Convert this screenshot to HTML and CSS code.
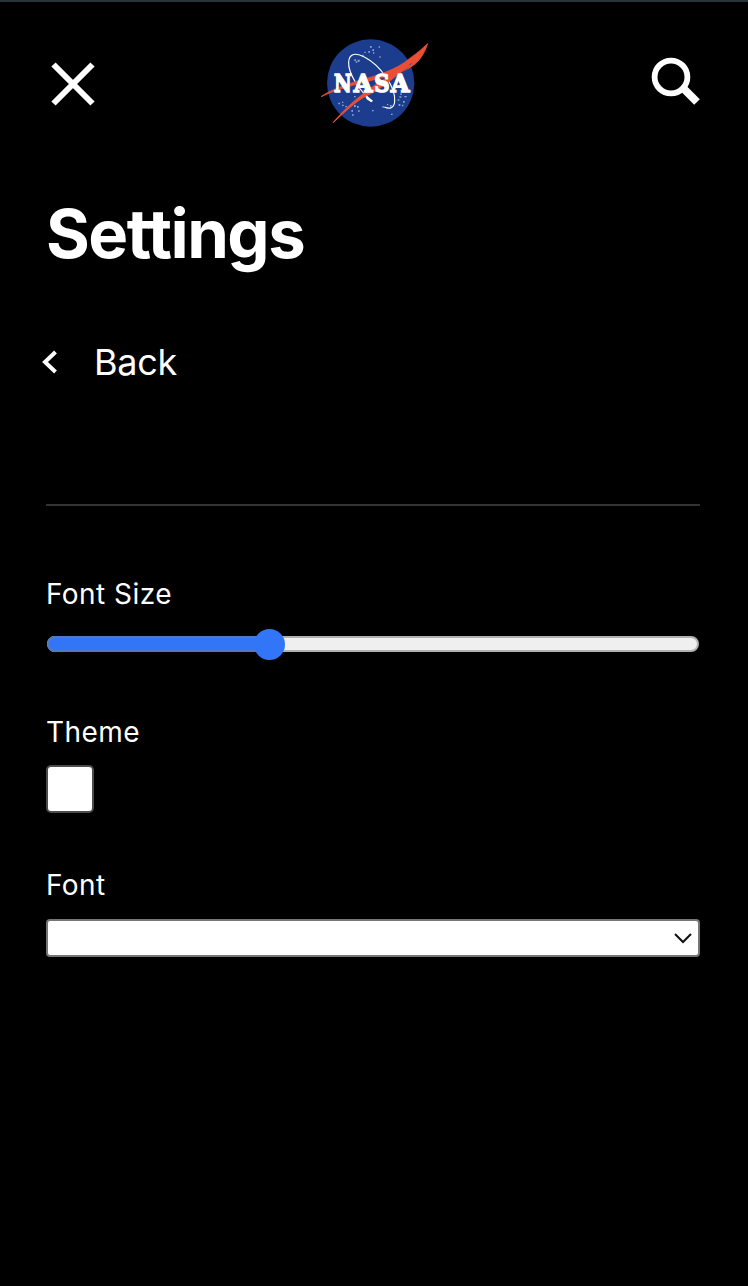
FILE: index.html
```html
<!DOCTYPE html>
<html lang="en">
<head>
<meta charset="utf-8">
<title>Settings</title>
<link rel="stylesheet" href="styles.css">
</head>
<body>
<div class="page">
  <header class="topbar">
    <button class="icon-button close" aria-label="Close">
      <svg class="close-icon" viewBox="0 0 54 54"><path d="M7.500 7.500 46.500 46.500M46.500 7.500 7.500 46.500"/></svg>
    </button>
    <svg class="logo" viewBox="0 0 360 300" role="img" aria-label="NASA">
      <circle cx="170" cy="153" r="131" fill="#1c3d8d"/>
      <g fill="#8ea5d4">
        <path d="M168 42h5v5h-5zM194 43h4v4h-4zM175 52h5v5h-5zM163 57h5v5h-5zM151 59h4v4h-4zM177 61h4v4h-4zM145 68h4v4h-4zM196 73h4v4h-4zM121 82h5v5h-5zM131 83h6v6h-6zM125 88h5v4h-5zM259 184h4v5h-4zM271 192h7v4h-7zM256 193h6v4h-6zM251 202h5v4h-5zM267 207h5v5h-5zM254 216h5v6h-5zM264 218h4v5h-4zM120 192h5v4h-5zM73 212h5v5h-5zM84 209h4v4h-4zM84 218h5v4h-5zM94 222h5v4h-5zM120 219h5v6h-5zM129 222h5v5h-5zM112 234h5v5h-5zM132 235h5v4h-5zM114 247h5v4h-5zM174 234h5v4h-5zM205 223h5v4h-5zM219 216h4v4h-4zM231 245h5v4h-5zM228 219h5v5h-5zM150 190h5v4h-5z"/>
      </g>
      <path class="orbit" d="M172 207C137 176 102 125 104 91C105 64 126 61 151 75C198 99 247 166 242 210C239 231 224 231 211 225"/>
      <path d="M149 184 177 206 172 211 158 202Z" fill="#fff"/>
      <path class="wing" d="M21 194C50 174 88 161 128 148C184 132 248 114 286 80C307 65 326 49 341 35C331 66 313 94 285 108C264 120 244 127 222 133C155 149 80 167 21 194Z"/>
      <path d="M206 158C239 136 270 118 292 94" fill="none" stroke="#1c3d8d" stroke-width="3"/>
      <path class="wing" d="M57 272C109 208 197 142 276 105L288 100C236 138 202 172 158 191C119 212 91 242 57 272Z"/>
      <g class="logo-text" transform="translate(0 179) scale(1 1.07)">
        <text x="60" textLength="53" lengthAdjust="spacingAndGlyphs">N</text>
        <text x="119" textLength="56" lengthAdjust="spacingAndGlyphs">A</text>
        <text x="181" textLength="46" lengthAdjust="spacingAndGlyphs">S</text>
        <text x="230" textLength="56" lengthAdjust="spacingAndGlyphs">A</text>
      </g>
    </svg>
    <button class="icon-button" aria-label="Search">
      <svg class="search-icon" viewBox="0 0 50 50"><circle cx="21" cy="20" r="16.400"/><path class="handle" d="m32 30 15 15"/></svg>
    </button>
  </header>
  <main>
    <h1 class="title">Settings</h1>
    <a class="back"><svg class="back-icon" viewBox="0 0 18 24"><path d="M15.500 2 5 12l10.500 10"/></svg><span>Back</span></a>
    <form class="settings">
      <div class="field">
        <label class="label">Font Size</label>
        <div class="slider"><div class="slider-fill"></div><div class="slider-thumb"></div></div>
      </div>
      <div class="field theme-field">
        <label class="label">Theme</label>
        <div class="checkbox"></div>
      </div>
      <div class="field font-field">
        <label class="label">Font</label>
        <div class="select"><svg class="select-icon" viewBox="0 0 20 12"><path d="m2 2 8 8 8-8"/></svg></div>
      </div>
    </form>
  </main>
</div>
</body>
</html>
```
FILE: styles.css
```css
* { box-sizing: border-box; }
body { margin: 0; background: #000; color: #fff; font-family: Inter, "Liberation Sans", sans-serif; }
.page { height: 1286px; padding: 0 48px 0 46px; border-top: 2px solid #27343b; overflow: hidden; }
.topbar { display: flex; justify-content: space-between; height: 160px; padding-top: 30px; }
.icon-button { display: block; padding: 0; border: 0; background: none; height: 54px; margin-top: 23px; }
.icon-button svg { display: block; fill: none; stroke: #fff; }
.icon-button.close { margin-top: 25px; }
.close-icon { width: 54px; height: 54px; stroke-width: 6; }
.search-icon { width: 50px; height: 50px; stroke-width: 5.800; }
.search-icon .handle { stroke-width: 8; }
.logo { width: 120px; height: 100px; margin-left: -2px; }
.orbit { fill: none; stroke: #fff; stroke-width: 3.500; }
.wing { fill: #ea4f35; stroke: #ea4f35; stroke-width: 2.500; stroke-linejoin: round; }
.logo-text { font: bold 67px "DejaVu Serif", serif; fill: #fff; stroke: #fff; stroke-width: 4; }
.title { margin: 30px 0 0; font-size: 67px; line-height: 84px; font-weight: 700; letter-spacing: -1.500px; }
.back { display: flex; align-items: center; height: 44px; margin: 64px 0 0 -6px; gap: 36px; font-size: 36px; letter-spacing: -.3px; }
.back-icon { width: 18px; height: 24px; fill: none; stroke: #fff; stroke-width: 4; }
.settings { margin-top: 120px; padding-top: 70px; border-top: 2px solid #333; }
.label { display: block; font-size: 28px; line-height: 36px; letter-spacing: .45px; }
.slider { position: relative; height: 16px; margin: 24px 1px 0; border: 2px solid #b2b2b2; border-radius: 8px; background: #efefef; }
.slider-fill { width: 222px; height: 16px; margin: -2px; border: 2px solid #5478c2; border-right: 0; border-radius: 8px 0 0 8px; background: #3275f6; }
.slider-thumb { position: absolute; left: 204.500px; top: -9.500px; width: 31px; height: 31px; border-radius: 50%; background: #3275f6; }
.theme-field { margin-top: 62px; }
.checkbox { width: 48px; height: 48px; margin-top: 15px; border: 2px solid #4c4c4c; border-radius: 5px; background: #fff; }
.font-field { margin-top: 54px; }
.select { display: flex; align-items: center; justify-content: flex-end; height: 38px; margin-top: 16px; padding-right: 5px; border: 2px solid #767676; border-radius: 4px; background: #fff; }
.select-icon { width: 20px; height: 12px; fill: none; stroke: #111; stroke-width: 2; }
```
